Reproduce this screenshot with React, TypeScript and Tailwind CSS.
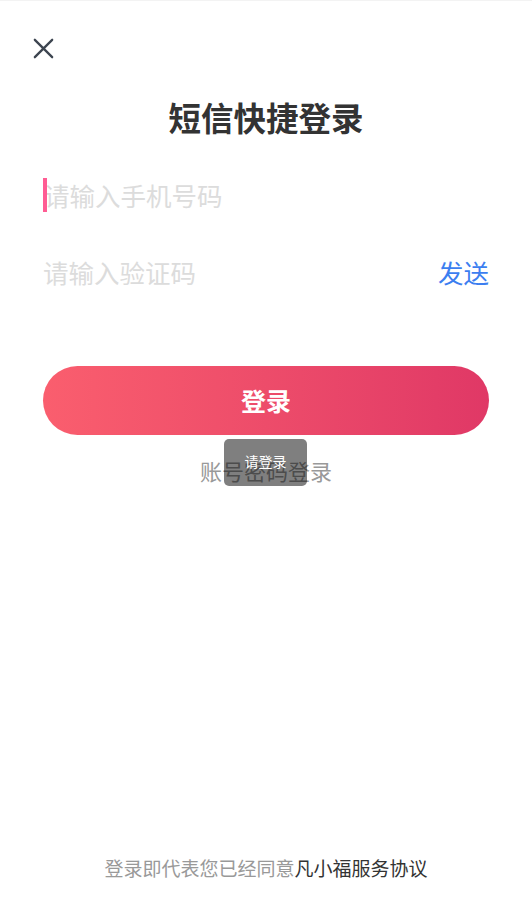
import React from 'react';

const CJK = { fontFamily: '"Noto Sans CJK SC", "Noto Sans", sans-serif' };

export default function App() {
  return (
    <div
      className="relative flex min-h-[924px] w-full flex-col border-t border-[#f3f3f3] bg-white px-[43px] pt-[37px]"
      style={CJK}
    >
      {/* close */}
      <button className="-ml-[10px] flex h-[21px] w-[21px] items-center justify-center">
        <svg width="23" height="23" viewBox="0 0 23 23" fill="none">
          <path d="M2 2L21 21M21 2L2 21" stroke="#3d4550" strokeWidth="2.5" strokeLinecap="round" />
        </svg>
      </button>

      <h1 className="mt-[41px] text-center text-[32.5px] font-bold leading-[33px] text-[#333]">
        短信快捷登录
      </h1>

      {/* phone */}
      <div className="relative mt-[45px] flex h-[34px] items-center">
        <span className="absolute left-0 top-0 h-[34px] w-[4px] bg-[#ff5c93]" />
        <span className="ml-[1px] text-[25.5px] leading-none text-[#dcdcdc]">请输入手机号码</span>
      </div>

      {/* code */}
      <div className="mt-[43px] flex h-[34px] items-center justify-between">
        <span className="text-[25.5px] leading-none text-[#dcdcdc]">请输入验证码</span>
        <span className="text-[25.5px] leading-none text-[#3c7ef0]">发送</span>
      </div>

      <button className="mt-[77px] flex h-[69px] w-full items-center justify-center rounded-full bg-gradient-to-r from-[#fa5e6e] to-[#e03866] text-[25px] font-bold text-white">
        登录
      </button>

      <div className="mt-[24px] text-center text-[22px] leading-[22px] text-[#999]">账号密码登录</div>

      {/* toast */}
      <div className="absolute left-[224px] top-[438px] flex h-[47px] w-[83px] items-center justify-center rounded-[5px] bg-black/50 pb-[3px] text-[14px] text-white">
        请登录
      </div>

      <div className="mb-[46px] mt-auto text-center text-[19px] leading-[20px] text-[#999]">
        登录即代表您已经同意<span className="text-[#333]">凡小福服务协议</span>
      </div>
    </div>
  );
}
